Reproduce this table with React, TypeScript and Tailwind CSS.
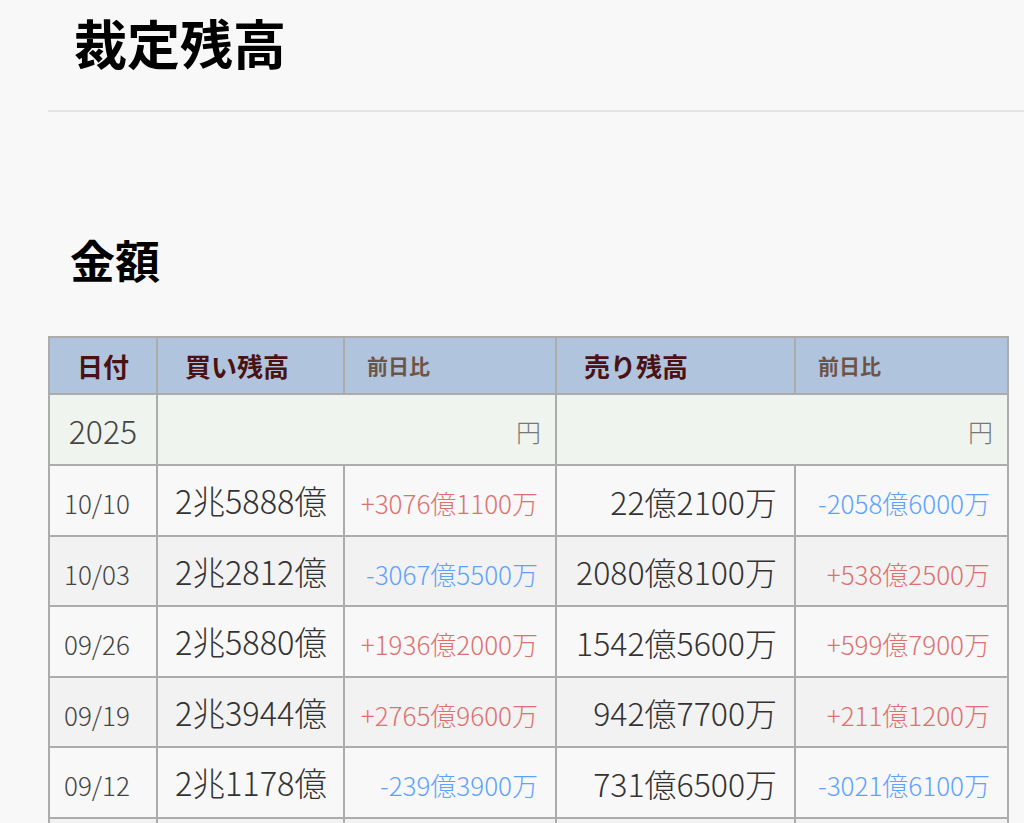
const rows = [
  { d: "10/10", buy: "2兆5888億", bc: "+3076億1100万", sell: "22億2100万", sc: "-2058億6000万" },
  { d: "10/03", buy: "2兆2812億", bc: "-3067億5500万", sell: "2080億8100万", sc: "+538億2500万" },
  { d: "09/26", buy: "2兆5880億", bc: "+1936億2000万", sell: "1542億5600万", sc: "+599億7900万" },
  { d: "09/19", buy: "2兆3944億", bc: "+2765億9600万", sell: "942億7700万", sc: "+211億1200万" },
  { d: "09/12", buy: "2兆1178億", bc: "-239億3900万", sell: "731億6500万", sc: "-3021億6100万" },
]

function Change({ v }: { v: string }) {
  const up = v.startsWith("+")
  return <span className={up ? "text-[#e07070]" : "text-[#5ea2ff]"}>{v}</span>
}

const cell = "border-2 border-[#acacac]"

export default function App() {
  return (
    <div className="min-h-screen bg-[#f8f8f8] font-['Noto_Sans_CJK_JP','Noto_Sans',sans-serif] text-[#333]">
      <div className="pl-[48px]">
        <header className="border-b-2 border-[#e4e4e4] pl-[26px] pt-[7px] pb-[33px]">
          <h1 className="text-[53px] font-bold leading-[70px] text-black">裁定残高</h1>
        </header>

        <section className="pt-[118px] pr-[15px]">
          <h2 className="pl-[22px] text-[45px] font-bold leading-[60px] text-black">金額</h2>

          <table className="mt-[46px] w-[959px] table-fixed border-collapse border-2 border-[#acacac]">
            <colgroup>
              <col className="w-[108px]" />
              <col className="w-[187px]" />
              <col className="w-[212px]" />
              <col className="w-[239px]" />
              <col className="w-[213px]" />
            </colgroup>
            <thead>
              <tr className="h-[57px] bg-[#b0c4de]">
                <th className={cell + " text-center text-[26px] font-bold text-[#4a1212]"}>日付</th>
                <th className={cell + " pl-[27px] text-left text-[26px] font-bold text-[#4a1212]"}>買い残高</th>
                <th className={cell + " pl-[22px] text-left text-[21px] font-bold text-[#6e5446]"}>前日比</th>
                <th className={cell + " pl-[27px] text-left text-[26px] font-bold text-[#4a1212]"}>売り残高</th>
                <th className={cell + " pl-[22px] text-left text-[21px] font-bold text-[#6e5446]"}>前日比</th>
              </tr>
            </thead>
            <tbody className="font-['Noto_Sans_CJK_JP_Light','Noto_Sans_CJK_JP',sans-serif]">
              <tr className="h-[71px] bg-[#eff4ee]">
                <td className={cell + " text-center text-[32px] text-[#444]"}>2025</td>
                <td colSpan={2} className={cell + " pr-[14px] pt-[4px] text-right text-[25px] text-[#777]"}>円</td>
                <td colSpan={2} className={cell + " pr-[14px] pt-[4px] text-right text-[25px] text-[#777]"}>円</td>
              </tr>
              {rows.map((r, i) => (
                <tr key={r.d} className={i % 2 === 0 ? "h-[71px] bg-[#f8f8f8]" : "h-[70px] bg-[#f2f2f2]"}>
                  <td className={cell + " pl-[14px] pt-[4px] text-[26px] text-[#444]"}>{r.d}</td>
                  <td className={cell + " pr-[16px] text-right text-[32.5px] text-[#333]"}>{r.buy}</td>
                  <td className={cell + " pr-[17px] pt-[4px] text-right text-[26px]"}>
                    <Change v={r.bc} />
                  </td>
                  <td className={cell + " pr-[17px] text-right text-[32px] text-[#333]"}>{r.sell}</td>
                  <td className={cell + " pr-[17px] pt-[4px] text-right text-[26px]"}>
                    <Change v={r.sc} />
                  </td>
                </tr>
              ))}
              <tr className="h-[70px] bg-[#f2f2f2]">
                <td className={cell} />
                <td className={cell} />
                <td className={cell} />
                <td className={cell} />
                <td className={cell} />
              </tr>
            </tbody>
          </table>
        </section>
      </div>
    </div>
  )
}
